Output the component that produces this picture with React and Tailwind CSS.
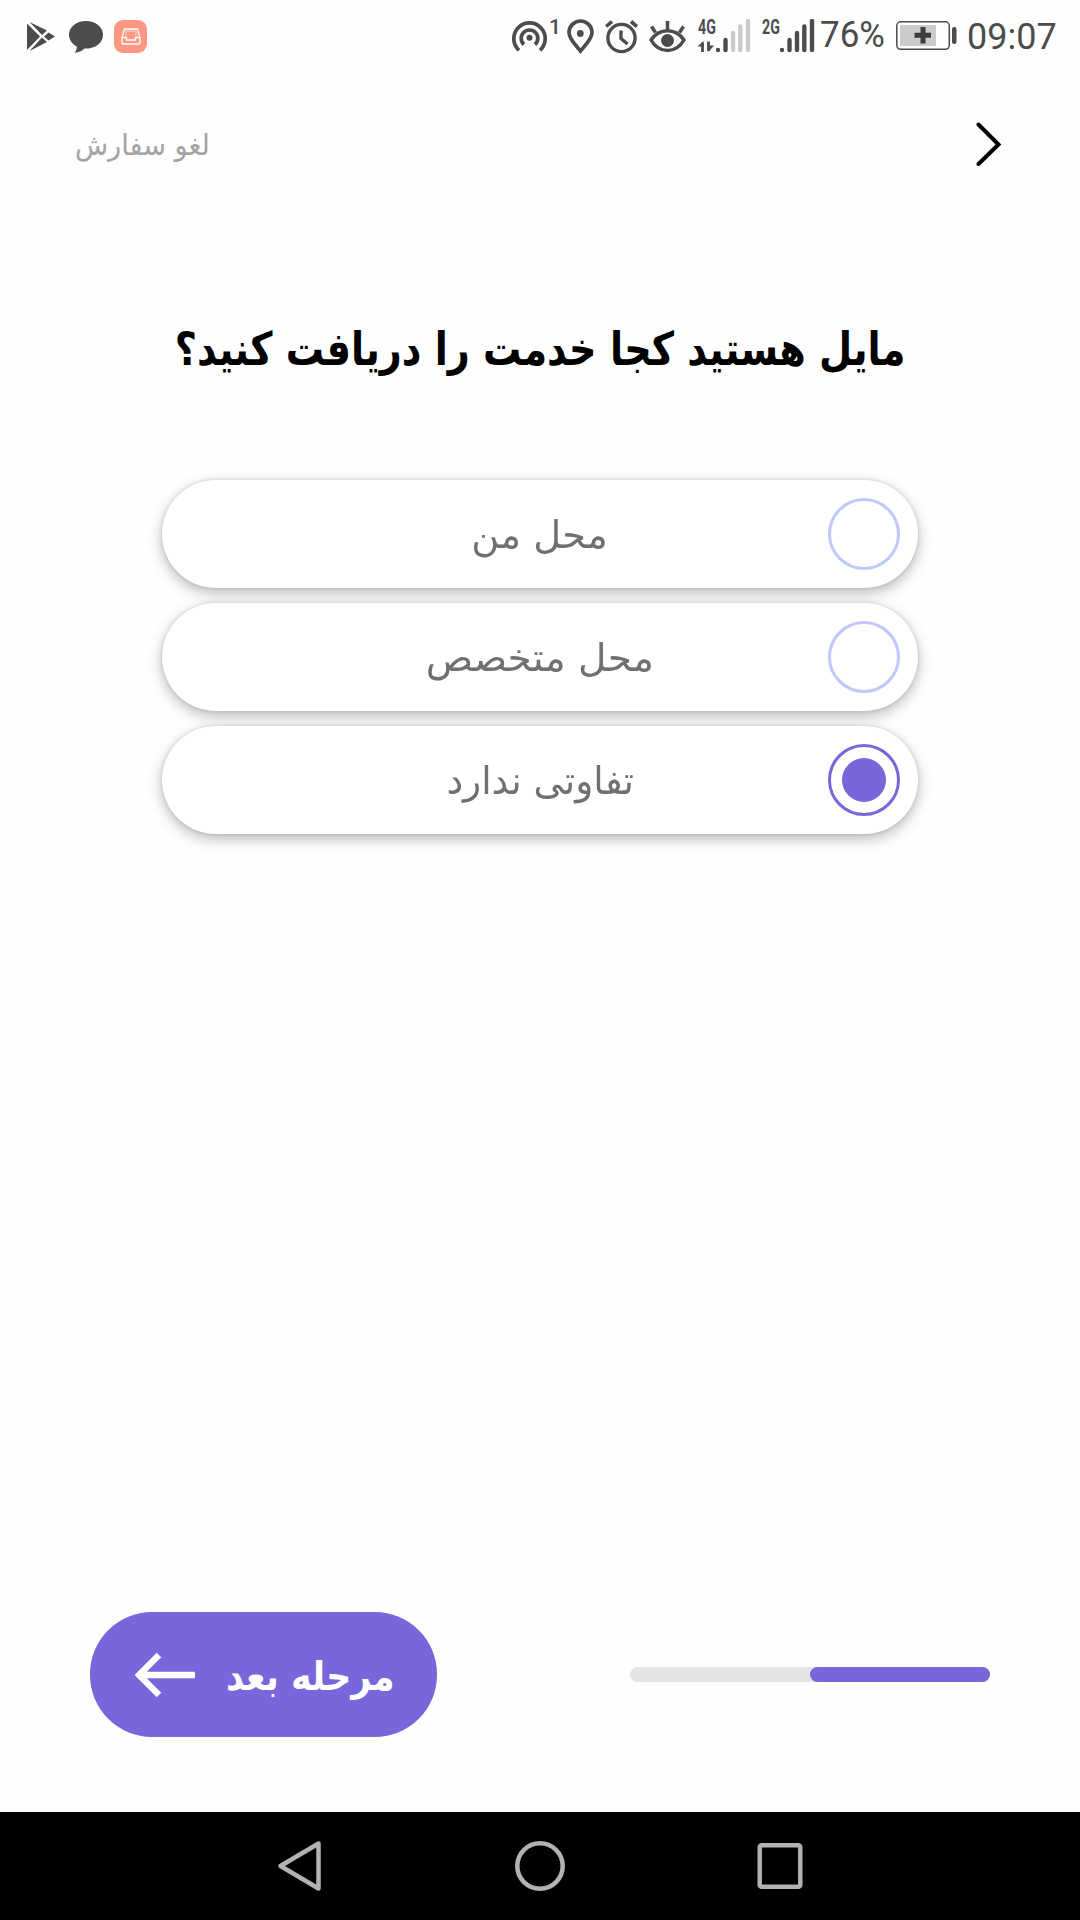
import clsx from 'clsx'

const options = [
    { id: 1, label: 'محل من', textClass: 'scale-x-[1.01]' },
    { id: 2, label: 'محل متخصص', textClass: 'scale-x-[1.03]' },
    { id: 3, label: 'تفاوتی ندارد', textClass: 'scale-x-[0.985]' },
]

const SignalBars = ({ active }) => {
    const bars = [
        { x: 3, y: 31 },
        { x: 10.5, y: 21 },
        { x: 18, y: 14 },
        { x: 25.3, y: 7.5 },
        { x: 33, y: 2 },
    ]

    return (
        <>
            {bars.map((bar, i) => (
                <path
                    key={bar.x}
                    d={`M${bar.x} ${bar.y}V31`}
                    stroke={i < active ? '#4c4c4c' : '#cbcbcb'}
                    strokeWidth="4.4"
                    strokeLinecap="round"
                />
            ))}
        </>
    )
}

const StatusBar = () => {
    return (
        <header className="flex h-[72px] shrink-0 items-start pl-[27px] pt-[19px] font-['Roboto',sans-serif] text-[#4c4c4c]">
            <svg className="mt-[2px] shrink-0" width="28" height="32" viewBox="0 0 28 32" fill="#4c4c4c">
                <path d="M0 2.5L13 15.5L0 29Z" />
                <path d="M2.5 1L20 9.5L15 14Z" />
                <path d="M2.5 30L20 21L15 16.500Z" />
                <path d="M21.5 11.5L28 15.500L21.500 19.500L17 15.500Z" />
            </svg>
            <svg className="ml-[14px] mt-[2px] shrink-0" width="34" height="32" viewBox="0 0 34 32" fill="#4c4c4c">
                <path d="M17 0C7.500 0 0 6 0 13.700C0 18.600 3 23 7.800 25.400C7.900 27.700 7.200 29.700 5.500 32C9.500 31.500 13 30 15.500 27.600C26 28 34 22 34 13.700C34 6 26.500 0 17 0Z" />
            </svg>
            <div className="ml-[11px] mt-px flex size-[33px] shrink-0 items-center justify-center rounded-[9px] bg-[#ff9783]">
                <svg width="20" height="17" viewBox="0 0 20 17" fill="none" stroke="#fff" strokeWidth="1.300" strokeLinejoin="round">
                    <path d="M3.500 1H16.500L19 10V14.500Q19 16 17.500 16H2.500Q1 16 1 14.500V10Z" />
                    <path d="M1.500 9.500H5.500V12H14.500V9.500H18.500" />
                    <path d="M5 8V3H15V8" strokeWidth="1" opacity="0.600" />
                </svg>
            </div>

            <svg className="ml-[365px] mt-px shrink-0" width="35" height="34" viewBox="0 0 35 34" fill="none" stroke="#4c4c4c" strokeWidth="3.700">
                <circle cx="17.500" cy="17.800" r="3" fill="#4c4c4c" stroke="none" />
                <path d="M7 30.300A15.700 15.700 0 1 1 28 30.300" />
                <path d="M12 24.500A8.300 8.300 0 1 1 23 24.500" />
            </svg>
            <span className="ml-[2px] mt-[-3px] w-[11px] shrink-0 text-[21px] font-medium leading-[22px]">1</span>
            <svg className="ml-[7px] shrink-0" width="27" height="35" viewBox="0 0 27 35" fill="none" stroke="#4c4c4c" strokeWidth="3.700">
                <path d="M13.500 32C9 26.500 2 20 2 13.500A11.300 11.300 0 0 1 25 13.500C25 20 18 26.500 13.500 32Z" />
                <circle cx="13.300" cy="14.500" r="3.400" fill="#4c4c4c" stroke="none" />
            </svg>
            <svg className="ml-[11px] shrink-0" width="33" height="35" viewBox="0 0 33 35" fill="none" stroke="#4c4c4c" strokeWidth="3.400">
                <circle cx="16.500" cy="19" r="13.600" />
                <path d="M16 11.500V19.500L22.500 25" />
                <path d="M1.200 7.500L7 2.500M26 2.500L32 7.500" strokeWidth="3.600" />
            </svg>
            <svg className="ml-[11px] shrink-0" width="37" height="35" viewBox="0 0 37 35" fill="none" stroke="#4c4c4c" strokeWidth="3.500">
                <path d="M2 21C10 8.500 27 8.500 35 21C27 35 10 35 2 21Z" strokeLinejoin="round" />
                <circle cx="18.500" cy="21.500" r="6.500" fill="#4c4c4c" stroke="none" />
                <path d="M18.500 2V11M2.500 7.500L6.500 13.500M34.500 7.500L30.500 13.500" />
            </svg>
            <div className="relative ml-[12px] h-[35px] w-[53px] shrink-0">
                <span className="absolute left-0 top-0 origin-left scale-x-[0.71] text-[20px] font-bold leading-[16px]">4G</span>
                <svg className="absolute left-0 top-0" width="53" height="35" viewBox="0 0 53 35" fill="none">
                    <path d="M4.500 33V23.500M10.500 22.500V32" stroke="#4c4c4c" strokeWidth="2.800" />
                    <path d="M-0.500 27.500L5.500 22V27.500ZM10.500 33L16 26.500H10.500Z" fill="#4c4c4c" />
                    <g transform="translate(17 0)">
                        <SignalBars active={2} />
                    </g>
                </svg>
            </div>
            <div className="relative ml-[11px] h-[35px] w-[53px] shrink-0">
                <span className="absolute left-0 top-0 origin-left scale-x-[0.71] text-[20px] font-bold leading-[16px]">2G</span>
                <svg className="absolute left-0 top-0" width="53" height="35" viewBox="0 0 53 35" fill="none">
                    <g transform="translate(17 0)">
                        <SignalBars active={5} />
                    </g>
                </svg>
            </div>
            <span className="ml-[5px] w-[66px] shrink-0 origin-left scale-x-[0.97] whitespace-nowrap text-[36px] leading-[32px]">76%</span>
            <svg className="ml-[10px] mt-[2px] shrink-0" width="61" height="30" viewBox="0 0 61 30" fill="none">
                <rect x="0.800" y="0.800" width="52.500" height="27.500" rx="4" stroke="#4c4c4c" strokeWidth="1.500" />
                <rect x="4" y="4" width="36" height="21" fill="#cbcbcb" />
                <path d="M27 6V22.500M18.500 14.300H35" stroke="#3c3c3c" strokeWidth="5" />
                <rect x="56" y="6" width="4.500" height="17" rx="2" fill="#4c4c4c" />
            </svg>
            <span className="ml-[10px] mt-px shrink-0 origin-left whitespace-nowrap text-[36px] leading-[34px]">09:07</span>
        </header>
    )
}

const TopBar = () => {
    return (
        <div className="flex h-[144px] shrink-0 items-center justify-between pl-[75px] pr-[76px]">
            <span className="mt-[2px] origin-left scale-x-[0.935] text-[29px] leading-[40px] text-[#a3a3a3]" dir="rtl">لغو سفارش</span>
            <svg width="28" height="44" viewBox="0 0 28 44" fill="none" stroke="#000" strokeWidth="4" strokeLinecap="round">
                <path d="M2.500 2.500L22.500 22.500L2.500 42" />
            </svg>
        </div>
    )
}

const OptionItem = ({ option, selected }) => {
    return (
        <button
            type="button"
            className="relative flex h-[108px] w-[756px] items-center justify-center rounded-[54px] bg-white text-[38px] text-[#707070]"
        >
            <span className={clsx('mt-px whitespace-nowrap leading-[48px]', option.textClass)}>{option.label}</span>
            <span
                className={clsx(
                    'absolute right-[18px] top-[18px] flex size-[72px] items-center justify-center rounded-full border-[3px]',
                    selected ? 'border-[#7866da]' : 'border-[#bfc7ff]'
                )}
            >
                {selected && <span className="size-[44px] rounded-full bg-[#7866da]" />}
            </span>
        </button>
    )
}

const NavBar = () => {
    return (
        <nav className="flex h-[108px] shrink-0 items-center bg-black pl-[276px]">
            <svg width="48" height="54" viewBox="0 0 48 54" fill="none" stroke="#b2b2b2" strokeWidth="4.500" strokeLinejoin="round">
                <path d="M42.500 4.500V49.500L4.500 27Z" />
            </svg>
            <svg className="ml-[189px]" width="54" height="54" viewBox="0 0 54 54" fill="none" stroke="#b2b2b2" strokeWidth="4.500">
                <circle cx="27" cy="27" r="22.700" />
            </svg>
            <svg className="ml-[186px]" width="54" height="54" viewBox="0 0 54 54" fill="none" stroke="#b2b2b2" strokeWidth="4.500">
                <rect x="6.700" y="6.200" width="40.600" height="41.600" rx="2" />
            </svg>
        </nav>
    )
}

const App = () => {
    const selectedId = 3

    return (
        <div className="flex h-[1920px] w-[1080px] flex-col overflow-hidden bg-[#fefefe] font-['DejaVu_Sans',sans-serif]">
            <StatusBar />
            <TopBar />

            <main className="flex grow flex-col items-center" dir="rtl">
                <h1 className="mt-[101px] scale-x-[0.83] whitespace-nowrap text-[46px] font-bold leading-[64px] text-black">
                    مایل هستید کجا خدمت را دریافت کنید؟
                </h1>

                {/* shadow sits on the group so it never falls on a neighbouring card */}
                <div className="mt-[99px] flex flex-col gap-[15px] [filter:drop-shadow(0_0_2px_rgba(0,0,0,0.14))_drop-shadow(0_5px_7px_rgba(0,0,0,0.26))]">
                    {options.map((option) => (
                        <OptionItem key={option.id} option={option} selected={option.id === selectedId} />
                    ))}
                </div>
            </main>

            <footer className="mb-[75px] flex h-[125px] shrink-0 items-center justify-between px-[90px]">
                <button type="button" className="flex h-[125px] w-[347px] items-center rounded-[62px] bg-[#7866da] pl-[45px] text-white">
                    <svg className="shrink-0" width="60" height="46" viewBox="0 0 60 46" fill="none" stroke="#fff" strokeWidth="6.400">
                        <path d="M60 23H5M24 3L4 23L24 43" />
                    </svg>
                    <span className="ml-[31px] mt-[2px] origin-left scale-x-[0.87] whitespace-nowrap text-[40px] font-bold leading-[50px]" dir="rtl">مرحله بعد</span>
                </button>
                <div className="flex h-[15px] w-[360px] justify-end rounded-full bg-[#e4e4e4]">
                    <div className="h-full w-1/2 rounded-full bg-[#7866da]" />
                </div>
            </footer>

            <NavBar />
        </div>
    )
}

export default App
